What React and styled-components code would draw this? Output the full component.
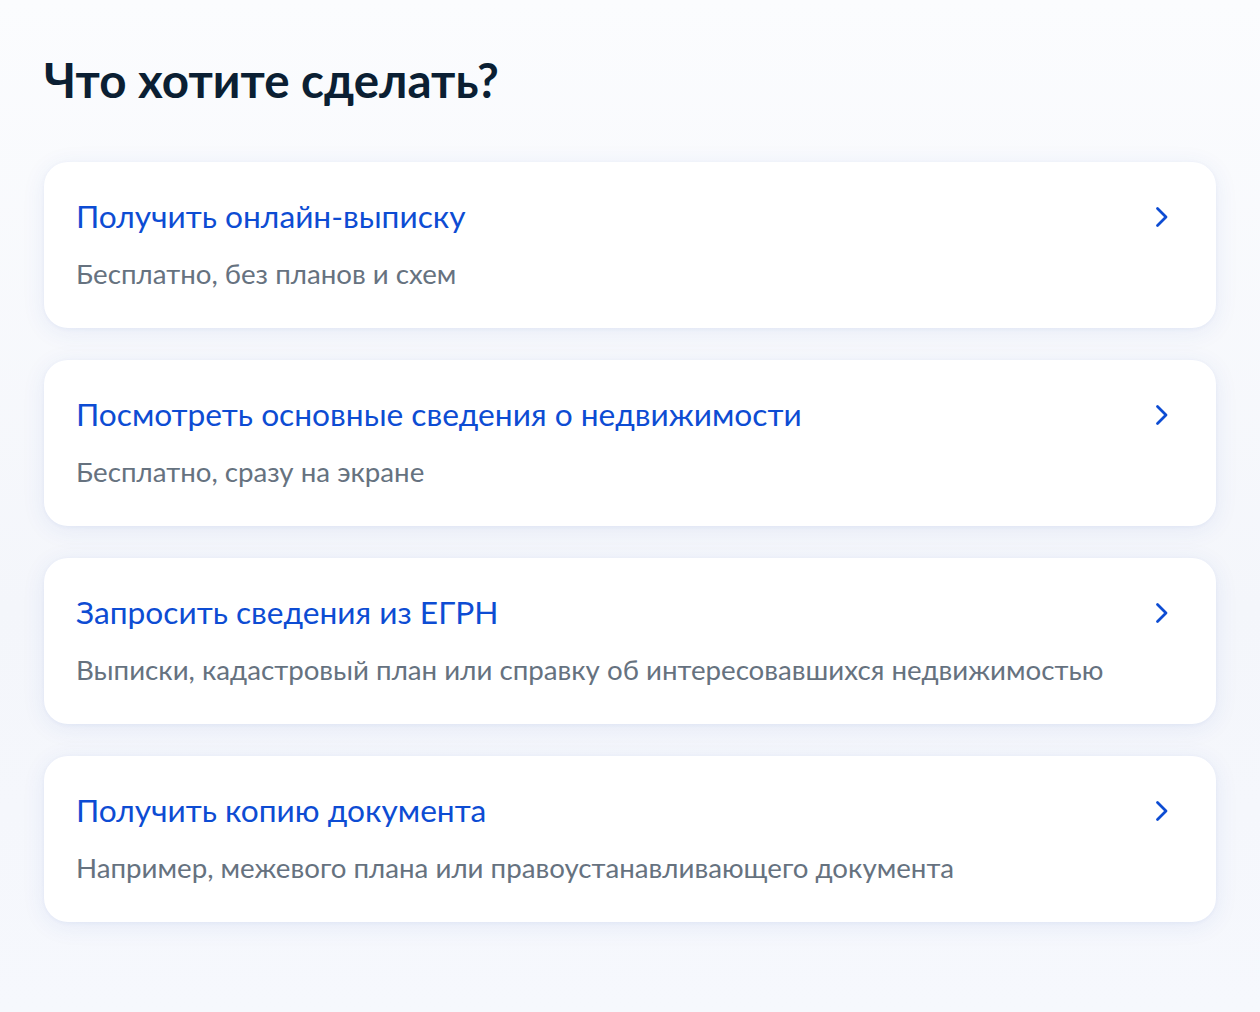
import React from "react"
import styled, { createGlobalStyle } from "styled-components"

const GlobalStyle = createGlobalStyle`
  html, body {
    margin: 0;
    padding: 0;
    background: #f6f8fc;
  }
  body {
    font-family: Lato, "Open Sans", sans-serif;
  }
`

const items = [
  { title: "Получить онлайн-выписку", text: "Бесплатно, без планов и схем" },
  { title: "Посмотреть основные сведения о недвижимости", text: "Бесплатно, сразу на экране" },
  { title: "Запросить сведения из ЕГРН", text: "Выписки, кадастровый план или справку об интересовавшихся недвижимостью" },
  { title: "Получить копию документа", text: "Например, межевого плана или правоустанавливающего документа" },
]

const Chevron = () => (
  <svg width="24" height="24" viewBox="0 0 24 24" fill="none">
    <path d="M7.5 3.5l8.5 8.5-8.5 8.5" stroke="#0d4cd3" strokeWidth="2.8" strokeLinecap="round" strokeLinejoin="round" />
  </svg>
)

const App = () => {
  return (
    <Page>
      <GlobalStyle />
      <Heading>Что хотите сделать?</Heading>
      <List>
        {items.map((it) => (
          <Card key={it.title}>
            <CardBody>
              <CardTitle>{it.title}</CardTitle>
              <CardText>{it.text}</CardText>
            </CardBody>
            <Arrow>
              <Chevron />
            </Arrow>
          </Card>
        ))}
      </List>
    </Page>
  )
}
export default App

const Page = styled.div`
  min-height: 1012px;
  box-sizing: border-box;
  padding: 50px 44px 60px 44px;
  background: linear-gradient(180deg, #fbfcfe 0%, #f4f6fb 60%, #f6f8fd 100%);
`

const Heading = styled.h1`
  margin: 0 0 52px 0;
  font-size: 47.5px;
  line-height: 60px;
  font-weight: 700;
  color: #0b1f33;
`

const List = styled.div`
  display: flex;
  flex-direction: column;
  gap: 32px;
`

const Card = styled.div`
  display: flex;
  align-items: flex-start;
  justify-content: space-between;
  height: 166px;
  box-sizing: border-box;
  padding: 34px 42px 0 32px;
  background: #fff;
  border-radius: 24px;
  box-shadow: 0 4px 24px rgba(40, 80, 180, 0.08), 0 1px 4px rgba(40, 80, 180, 0.05);
`

const CardBody = styled.div`
  display: flex;
  flex-direction: column;
  gap: 20px;
`

const CardTitle = styled.div`
  font-size: 31.7px;
  line-height: 40px;
  color: #0d4cd3;
`

const CardText = styled.div`
  font-size: 27.7px;
  line-height: 36px;
  color: #66727f;
`

const Arrow = styled.div`
  display: flex;
  margin-top: 9px;
`
